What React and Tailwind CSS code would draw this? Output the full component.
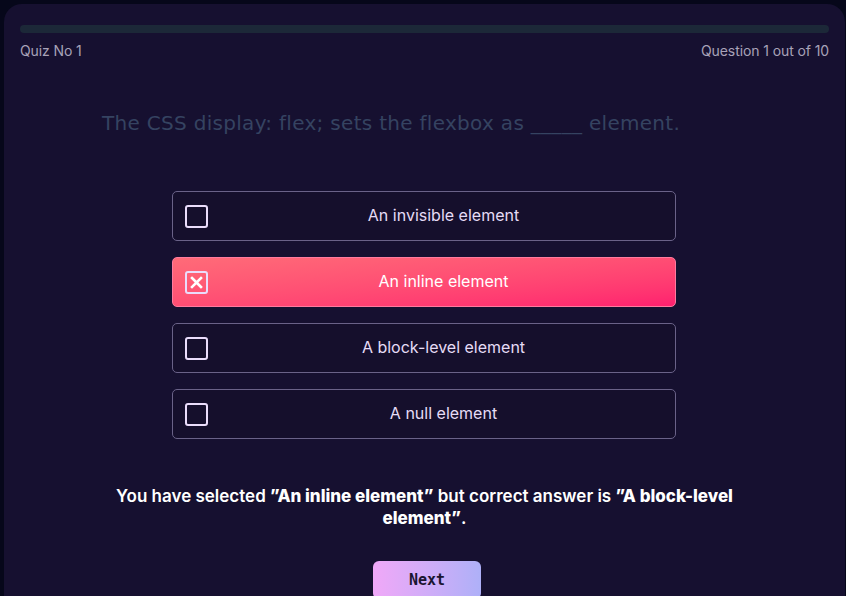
export default function App() {
  const options = [
    { label: "An invisible element", selected: false },
    { label: "An inline element", selected: true },
    { label: "A block-level element", selected: false },
    { label: "A null element", selected: false },
  ];
  return (
    <div className="w-[846px] h-[596px] overflow-hidden bg-[#06071a] pt-[4px] pl-[4px]" style={{ fontFamily: "Inter, 'Noto Sans', sans-serif" }}>
      <div className="h-[600px] w-[841px] rounded-t-[18px] bg-[#161030] px-[16px] pt-[21px]">
        <div className="h-[8px] rounded-full bg-[#1c2838]" />
        <div className="mt-[9px] flex justify-between text-[14px] leading-[18px] text-[#a8a2b8] tracking-[-0.1px]">
          <span>Quiz No 1</span>
          <span>Question 1 out of 10</span>
        </div>
        <div className="mt-[50px] pl-[82px] text-[20px] leading-[26px] tracking-[0.3px] text-[#354361]" style={{ fontFamily: "'DejaVu Sans', sans-serif" }}>
          The CSS display: flex; sets the flexbox as _____ element.
        </div>
        <div className="mt-[55px] flex flex-col items-center gap-[16px] pr-[1px]">
          {options.map((o) => (
            <div
              key={o.label}
              className={
                o.selected
                  ? "flex h-[50px] w-[504px] items-center rounded-[5px] border border-[#ff7a9e] bg-gradient-to-br from-[#ff6b78] to-[#ff1f6f] pl-[12px]"
                  : "flex h-[50px] w-[504px] items-center rounded-[5px] border border-[#6a6288] bg-[#150f2c] pl-[12px]"
              }
            >
              <div className="mr-[4px] flex h-[23px] w-[23px] shrink-0 items-center justify-center rounded-[3px] border-2 border-[#eadcfb]">
                {o.selected && (
                  <svg width="13" height="13" viewBox="0 0 13 13">
                    <path d="M2 2 L11 11 M11 2 L2 11" stroke="#ffffff" strokeWidth="2.6" strokeLinecap="square" />
                  </svg>
                )}
              </div>
              <span className={o.selected ? "flex-1 text-center text-[16px] leading-[20px] pb-[3px] text-white" : "flex-1 text-center text-[16px] leading-[20px] pb-[3px] text-[#e6dcf6]"}>{o.label}</span>
            </div>
          ))}
        </div>
        <p className="mx-auto mt-[46px] w-[660px] text-center text-[17px] leading-[22px] font-semibold text-white">
          You have selected <b className="font-extrabold">”An inline element”</b> but correct answer is <b className="font-extrabold">”A block-level element”</b>.
        </p>
        <div className="mt-[32px] flex justify-center pl-[5px]">
          <button className="h-[38px] w-[108px] rounded-[6px] bg-gradient-to-r from-[#f0a8f8] to-[#aeb0f8] text-[15px] font-bold text-[#1a1530]" style={{ fontFamily: "'DejaVu Sans Mono', monospace" }}>
            Next
          </button>
        </div>
      </div>
    </div>
  );
}
